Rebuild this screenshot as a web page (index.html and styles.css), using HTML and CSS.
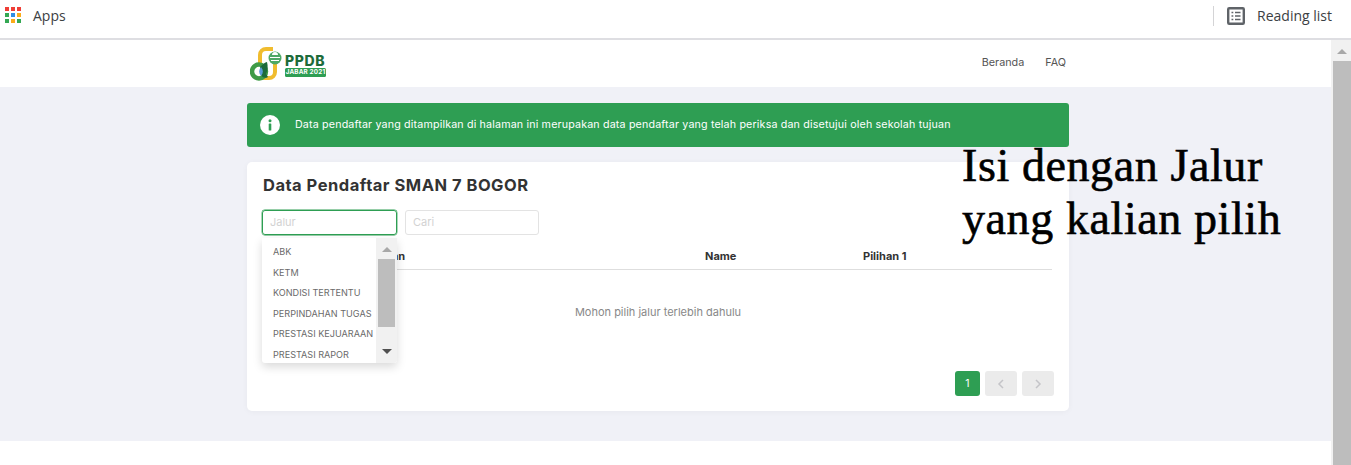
FILE: index.html
```html
<!DOCTYPE html>
<html lang="id">
<head>
<meta charset="utf-8">
<title>PPDB Jabar 2021</title>
<link rel="stylesheet" href="styles.css">
</head>
<body>
<header class="browserbar">
  <div class="apps">
    <svg class="apps-icon" width="16" height="16" viewBox="0 0 16 16">
      <rect x="0" y="0" width="4" height="4" fill="#ef3e36"/><rect x="6" y="0" width="4" height="4" fill="#ef3e36"/><rect x="12" y="0" width="4" height="4" fill="#ef3e36"/>
      <rect x="0" y="6" width="4" height="4" fill="#34a853"/><rect x="6" y="6" width="4" height="4" fill="#2f8de4"/><rect x="12" y="6" width="4" height="4" fill="#fbab18"/>
      <rect x="0" y="12" width="4" height="4" fill="#34a853"/><rect x="6" y="12" width="4" height="4" fill="#fbab18"/><rect x="12" y="12" width="4" height="4" fill="#34a853"/>
    </svg>
    <span>Apps</span>
  </div>
  <div class="reading">
    <svg class="reading-icon" width="18" height="18" viewBox="0 0 18 18">
      <rect x="1.200" y="1.200" width="15.600" height="15.600" rx="1" fill="none" stroke="#5f6368" stroke-width="2.400"/>
      <path d="M4.500 5.500h1.800M8 5.500h5.500M4.500 9h1.800M8 9h5.500M4.500 12.500h1.800M8 12.500h5.500" stroke="#5f6368" stroke-width="1.500" fill="none"/>
    </svg>
    <span>Reading list</span>
  </div>
</header>
<div class="viewport">
  <div class="page">
    <nav class="topnav">
      <div class="logo">
        <svg width="35" height="34" viewBox="0 0 35 34">
          <path d="M10 18V8a6 6 0 0 1 6-6h7" fill="none" stroke="#f0bc2e" stroke-width="4"/>
          <path d="M25 14V25a6 6 0 0 1-6 6h-7" fill="none" stroke="#f0bc2e" stroke-width="4"/>
          <circle cx="9" cy="24.500" r="7" fill="none" stroke="#3f9b47" stroke-width="4.500"/>
          <path d="M10 20c3-3 5-4.500 7-5 1 4 1 8-1 12l2 3c-3 2-6 0-7-2z" fill="#1d6b3a"/>
          <path d="M11 20c-2.500 3-2.500 6 0 9 2.500-3 2.500-6 0-9z" fill="#5a9bd8"/>
          <circle cx="25" cy="11" r="6.500" fill="#4ea866"/>
          <path d="M20 10.500h10M21 13.500h8" stroke="#fff" stroke-width="1.200"/>
          <path d="M22 8a3 3 0 0 1 6 0z" fill="#fff"/>
        </svg>
        <div class="logo-text">
          <strong>PPDB</strong>
          <span>JABAR 2021</span>
        </div>
      </div>
      <div class="links"><a>Beranda</a><a>FAQ</a></div>
    </nav>
    <main class="content">
      <div class="alert">
        <svg width="20" height="20" viewBox="0 0 20 20">
          <circle cx="10" cy="10" r="10" fill="#fff"/>
          <rect x="8.700" y="8.500" width="2.600" height="7" rx=".6" fill="#2e9e53"/>
          <circle cx="10" cy="5.800" r="1.500" fill="#2e9e53"/>
        </svg>
        <p>Data pendaftar yang ditampilkan di halaman ini merupakan data pendaftar yang telah periksa dan disetujui oleh sekolah tujuan</p>
      </div>
      <section class="card">
        <h1>Data Pendaftar SMAN 7 BOGOR</h1>
        <div class="filters">
          <div class="field focus">Jalur</div>
          <div class="field">Cari</div>
        </div>
        <div class="thead">
          <span class="col-a">Pilihan</span>
          <span class="col-b">Name</span>
          <span class="col-c">Pilihan 1</span>
        </div>
        <div class="empty">Mohon pilih jalur terlebih dahulu</div>
        <div class="pager">
          <span class="pg active">1</span>
          <span class="pg nav"><svg width="8" height="10" viewBox="0 0 8 10"><path d="M6 1L2 5l4 4" fill="none" stroke="#c4c4c8" stroke-width="1.500"/></svg></span>
          <span class="pg nav"><svg width="8" height="10" viewBox="0 0 8 10"><path d="M2 1l4 4-4 4" fill="none" stroke="#c4c4c8" stroke-width="1.500"/></svg></span>
        </div>
        <div class="dropdown">
          <ul>
            <li>ABK</li><li>KETM</li><li>KONDISI TERTENTU</li><li>PERPINDAHAN TUGAS</li><li>PRESTASI KEJUARAAN</li><li>PRESTASI RAPOR</li>
          </ul>
          <div class="dd-scroll">
            <i class="up"></i>
            <b></b>
            <i class="down"></i>
          </div>
        </div>
      </section>
    </main>
    <div class="note">Isi dengan Jalur<br>yang kalian pilih</div>
  </div>
  <div class="scrollbar"><i class="up"></i><b></b></div>
</div>
</body>
</html>
```
FILE: styles.css
```css
* { box-sizing: border-box; }
html, body { margin: 0; height: 465px; overflow: hidden; background: #fff; }
body { font-family: "Inter", "Liberation Sans", sans-serif; color: #333; }

.browserbar {
  height: 40px;
  display: flex;
  justify-content: space-between;
  border-bottom: 2px solid #dedee2;
  font-family: "Open Sans", sans-serif;
  font-size: 14px;
  color: #3c4043;
  padding-top: 7px;
}
.apps { display: flex; align-items: flex-start; padding-left: 5px; }
.apps-icon { margin-right: 12px; }
.apps span { line-height: 18px; }
.reading {
  display: flex;
  align-items: center;
  height: 20px;
  margin-right: 19px;
  padding-left: 13px;
  border-left: 1px solid #d4d4d6;
  margin-top: -1px;
}
.reading-icon { margin-right: 12px; }
.reading span { margin-bottom: 2px; }

.viewport { display: flex; height: 425px; }
.page { position: relative; flex: 1; min-width: 0; }

.topnav { height: 47px; padding-left: 250px; padding-right: 265px; display: flex; justify-content: space-between; align-items: center; }
.logo { display: flex; align-items: center; gap: 0; }
.logo-text { display: flex; flex-direction: column; align-items: stretch; width: 41px; margin-top: 3px; }
.logo-text strong { font-size: 14px; line-height: 13px; color: #1d6b3a; font-weight: 800; letter-spacing: .6px; }
.logo-text span { background: #2e9e53; color: #fff; font-size: 6.300px; line-height: 9px; font-weight: 700; letter-spacing: .2px; text-align: center; border-radius: 1.500px; white-space: nowrap; margin-top: 1px; }
.links { display: flex; gap: 21px; font-size: 10.800px; color: #555; margin-bottom: 2px; }

.content { background: #f0f1f7; height: 354px; padding: 16px 262px 0 247px; }
.alert {
  height: 44px;
  background: #2e9e53;
  border-radius: 3px;
  display: flex;
  align-items: center;
  padding-left: 13px;
  color: #fff;
  font-size: 10.700px;
  letter-spacing: .16px;
}
.alert p { margin: 0 0 2px 15px; white-space: nowrap; }

.card {
  position: relative;
  margin-top: 15px;
  height: 249px;
  background: #fff;
  border-radius: 5px;
  box-shadow: 0 1px 6px rgba(0,0,0,.04);
  padding: 14px 16px 0;
}
.card h1 { margin: 0; font-size: 16.500px; line-height: 19px; font-weight: 700; letter-spacing: .5px; color: #333; }
.filters { display: flex; gap: 8px; margin-top: 15px; margin-left: -1px; }
.field {
  width: 134px;
  height: 25px;
  border: 1px solid #e3e3e3;
  border-radius: 3px;
  font-size: 11px;
  line-height: 23px;
  padding-left: 7px;
  color: #d2d2d2;
}
.field.focus { width: 135px; border-color: #2e9e53; box-shadow: 0 0 0 .4px #2e9e53; }

.thead {
  display: flex;
  height: 31px;
  margin-top: 4px;
  margin-right: 1px;
  border-bottom: 1px solid #dedede;
  font-size: 11px;
  font-weight: 700;
  color: #333;
  line-height: 35px;
}
.col-a { width: 442px; padding-left: 106px; }
.col-b { width: 158px; }

.empty { margin-top: 35px; text-align: center; font-size: 11px; line-height: 14px; color: #888; }
.pager { display: flex; justify-content: flex-end; gap: 5px; margin-top: 52px; margin-right: -1px; }
.pg { width: 25px; height: 25px; border-radius: 3px; display: flex; align-items: center; justify-content: center; font-size: 10.500px; }
.pg.active { background: #2e9e53; color: #fff; }
.pg.nav { width: 32px; background: #ebebeb; }

.dropdown {
  position: absolute;
  left: 15px;
  top: 76px;
  width: 135px;
  height: 125px;
  background: #fff;
  display: flex;
  border-radius: 0 0 3px 3px;
  box-shadow: 0 4px 10px rgba(0,0,0,.15);
  overflow: hidden;
}
.dropdown ul { list-style: none; margin: 0; padding: 4px 0 0 11px; flex: 1; min-width: 0; }
.dropdown li { height: 20.500px; line-height: 20.500px; font-size: 9.100px; color: #6a6a6a; white-space: nowrap; }
.dd-scroll { width: 21px; flex: none; background: #f1f1f1; display: flex; flex-direction: column; align-items: center; padding-top: 9px; }
.dd-scroll b { display: block; width: 17px; height: 68px; background: #bdbdbd; margin-top: 7px; }
.dd-scroll .down { margin-top: 22px; }

.up { display: block; width: 0; height: 0; border: 5px solid transparent; border-top: 0; border-bottom: 5px solid #a8a8a8; }
.down { display: block; width: 0; height: 0; border: 5px solid transparent; border-bottom: 0; border-top: 5px solid #505050; }

.note {
  position: absolute;
  left: 962px;
  top: 99px;
  font-family: "Liberation Serif", serif;
  font-size: 46px;
  line-height: 53px;
  letter-spacing: .6px;
  -webkit-text-stroke: .6px #000;
  color: #000;
  white-space: nowrap;
}

.scrollbar { width: 20px; flex: none; background: #f1f1f1; display: flex; flex-direction: column; align-items: center; padding-top: 9px; padding-left: 2px; }
.scrollbar b { display: block; width: 18px; flex: 1; background: #bdbdbd; margin-top: 7px; }
```
